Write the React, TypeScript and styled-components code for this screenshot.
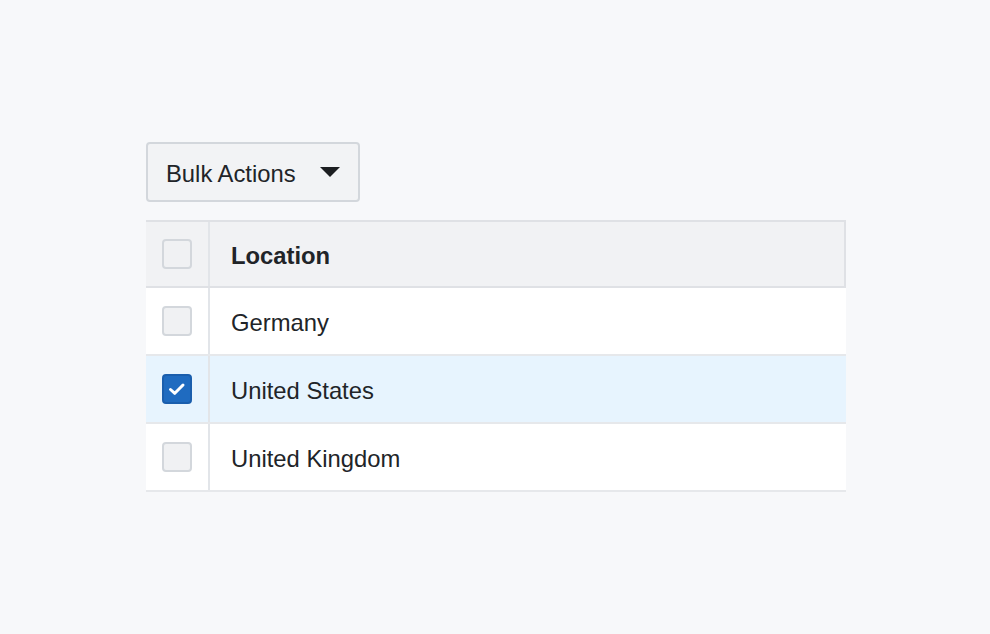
import React, { useState } from "react";
import styled, { createGlobalStyle } from "styled-components";

const Global = createGlobalStyle`
  html, body { margin: 0; padding: 0; background: #f7f8fa; }
  body { font-family: "Liberation Sans", Arial, sans-serif; color: #212428; }
`;

const Page = styled.div`
  width: 990px;
  height: 634px;
  box-sizing: border-box;
  padding: 142px 0 0 146px;
  display: flex;
  flex-direction: column;
  align-items: flex-start;
  gap: 18px;
`;

const DropButton = styled.button`
  width: 214px;
  height: 60px;
  box-sizing: border-box;
  display: flex;
  align-items: center;
  justify-content: space-between;
  padding: 3px 18px 0 18px;
  background: #f2f3f5;
  border: 2px solid #d3d7dc;
  border-radius: 4px;
  font-family: inherit;
  font-size: 23.8px;
  color: #212428;
  cursor: pointer;
`;

const Caret = styled.span`
  width: 0;
  height: 0;
  border-left: 10.5px solid transparent;
  border-right: 10.5px solid transparent;
  border-top: 10px solid #1c1e21;
  margin-top: -3px;
`;

const Table = styled.div`
  width: 700px;
  display: flex;
  flex-direction: column;
`;

const Row = styled.div<{ $head?: boolean; $selected?: boolean }>`
  display: grid;
  grid-template-columns: 64px 1fr;
  height: 68px;
  box-sizing: border-box;
  background: ${(p) => (p.$head ? "#f1f2f4" : p.$selected ? "#e7f4fe" : "#ffffff")};
  border-bottom: 2px solid ${(p) => (p.$head ? "#dfe1e5" : "#e6e8eb")};
  border-top: ${(p) => (p.$head ? "2px solid #dfe1e5" : "none")};
  border-right: ${(p) => (p.$head ? "2px solid #dfe1e5" : "none")};
`;

const CheckCell = styled.div`
  display: flex;
  align-items: center;
  padding-left: 16px;
  border-right: 2px solid #e2e5e9;
`;

const TextCell = styled.div<{ $head?: boolean }>`
  display: flex;
  align-items: center;
  padding: 4px 0 0 21px;
  font-size: 23.8px;
  font-weight: ${(p) => (p.$head ? 700 : 400)};
  color: #212428;
`;

const Box = styled.span<{ $checked?: boolean }>`
  width: 30px;
  height: 30px;
  box-sizing: border-box;
  border-radius: 4px;
  border: 2px solid ${(p) => (p.$checked ? "#1a5ead" : "#d3d7dc")};
  background: ${(p) => (p.$checked ? "#1f6bc0" : "#f0f1f3")};
  display: flex;
  align-items: center;
  justify-content: center;
  cursor: pointer;
`;

const rows = [
  { name: "Germany", checked: false },
  { name: "United States", checked: true },
  { name: "United Kingdom", checked: false },
];

export default function App() {
  const [items, setItems] = useState(rows);
  const toggle = (i: number) =>
    setItems((s) => s.map((r, j) => (j === i ? { ...r, checked: !r.checked } : r)));
  return (
    <>
      <Global />
      <Page>
        <DropButton>
          <span>Bulk Actions</span>
          <Caret />
        </DropButton>
        <Table>
          <Row $head>
            <CheckCell>
              <Box />
            </CheckCell>
            <TextCell $head>Location</TextCell>
          </Row>
          {items.map((r, i) => (
            <Row key={r.name} $selected={r.checked}>
              <CheckCell>
                <Box $checked={r.checked} onClick={() => toggle(i)}>
                  {r.checked && (
                    <svg width="18" height="14" viewBox="0 0 18 14">
                      <path
                        d="M2.5 7.5 L6.8 11.3 L15 3"
                        fill="none"
                        stroke="#fff"
                        strokeWidth="3"
                        strokeLinecap="round"
                        strokeLinejoin="round"
                      />
                    </svg>
                  )}
                </Box>
              </CheckCell>
              <TextCell>{r.name}</TextCell>
            </Row>
          ))}
        </Table>
      </Page>
    </>
  );
}
